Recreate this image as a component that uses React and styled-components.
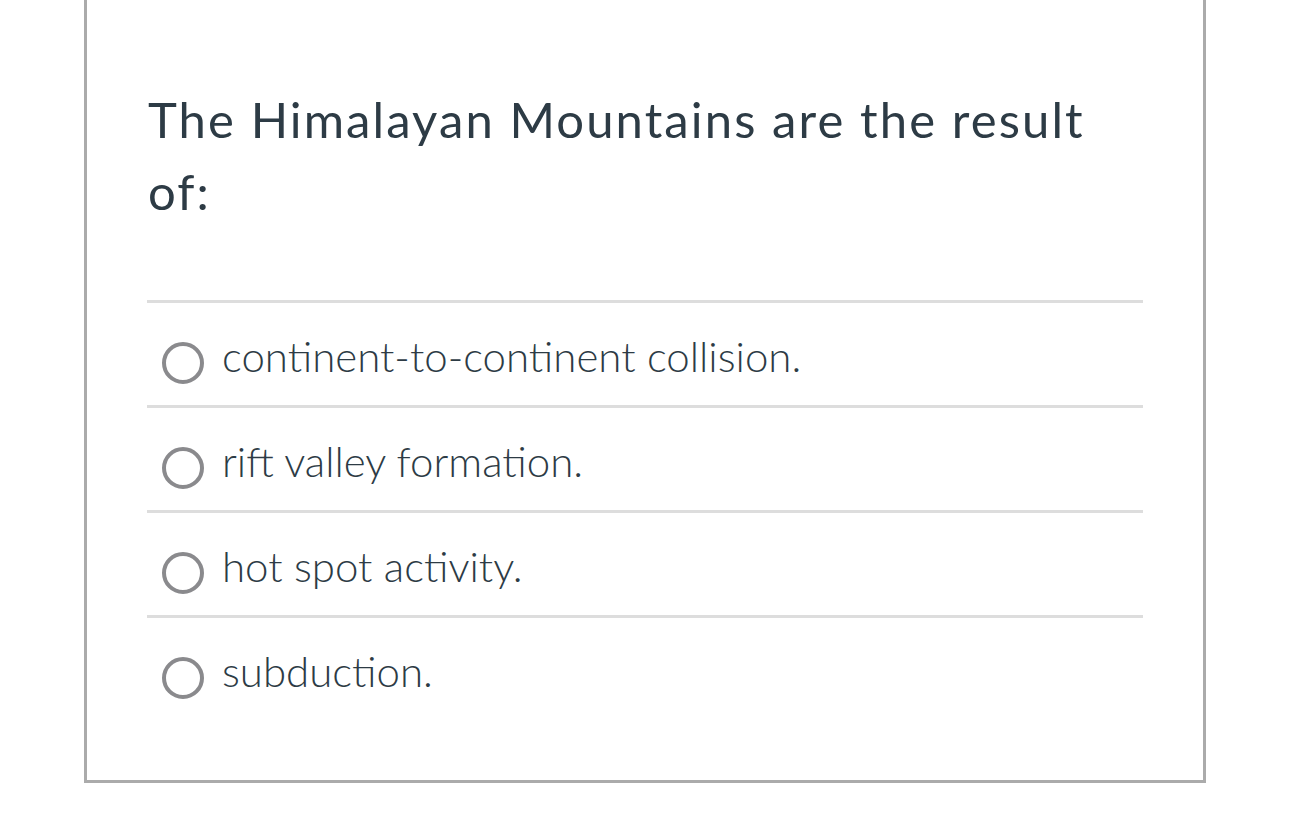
import React from 'react';
import styled, { createGlobalStyle } from 'styled-components';

const Global = createGlobalStyle`
    html, body {
        margin: 0;
        padding: 0;
        background: #ffffff;
    }
    body {
        font-family: Lato, "Open Sans", sans-serif;
    }
`

const Page = styled.div`
    padding-left: 84px;
    width: 1122px;
`

const Card = styled.div`
    border: 3px solid #ababab;
    border-top: none;
    padding: 83px 60px 60px 60px;
`

const Question = styled.div`
    font-size: 49px;
    line-height: 72px;
    letter-spacing: 2.1px;
    color: #2d3b45;
    font-weight: 400;
    margin-bottom: 73px;
    padding-left: 1px;
`

const Answers = styled.div`
    display: flex;
    flex-direction: column;
`

const Answer = styled.label`
    box-sizing: border-box;
    display: flex;
    align-items: center;
    gap: 18px;
    height: 105px;
    padding: 17px 0 0 15px;
    border-top: 3px solid #dddddd;
`

const Radio = styled.span`
    box-sizing: border-box;
    width: 42px;
    height: 42px;
    border-radius: 50%;
    border: 4px solid #8a8a8d;
    flex: none;
`

const AnswerText = styled.span`
    font-size: 42px;
    font-weight: 300;
    color: #2d3b45;
    margin-bottom: 14px;
`

const answers = [
    'continent-to-continent collision.',
    'rift valley formation.',
    'hot spot activity.',
    'subduction.',
];

export default function App() {
    return <Page>
        <Global/>
        <Card>
            <Question>The Himalayan Mountains are the result of:</Question>
            <Answers>
                {answers.map((a) => <Answer key={a}>
                    <Radio/>
                    <AnswerText>{a}</AnswerText>
                </Answer>)}
            </Answers>
        </Card>
    </Page>;
}
